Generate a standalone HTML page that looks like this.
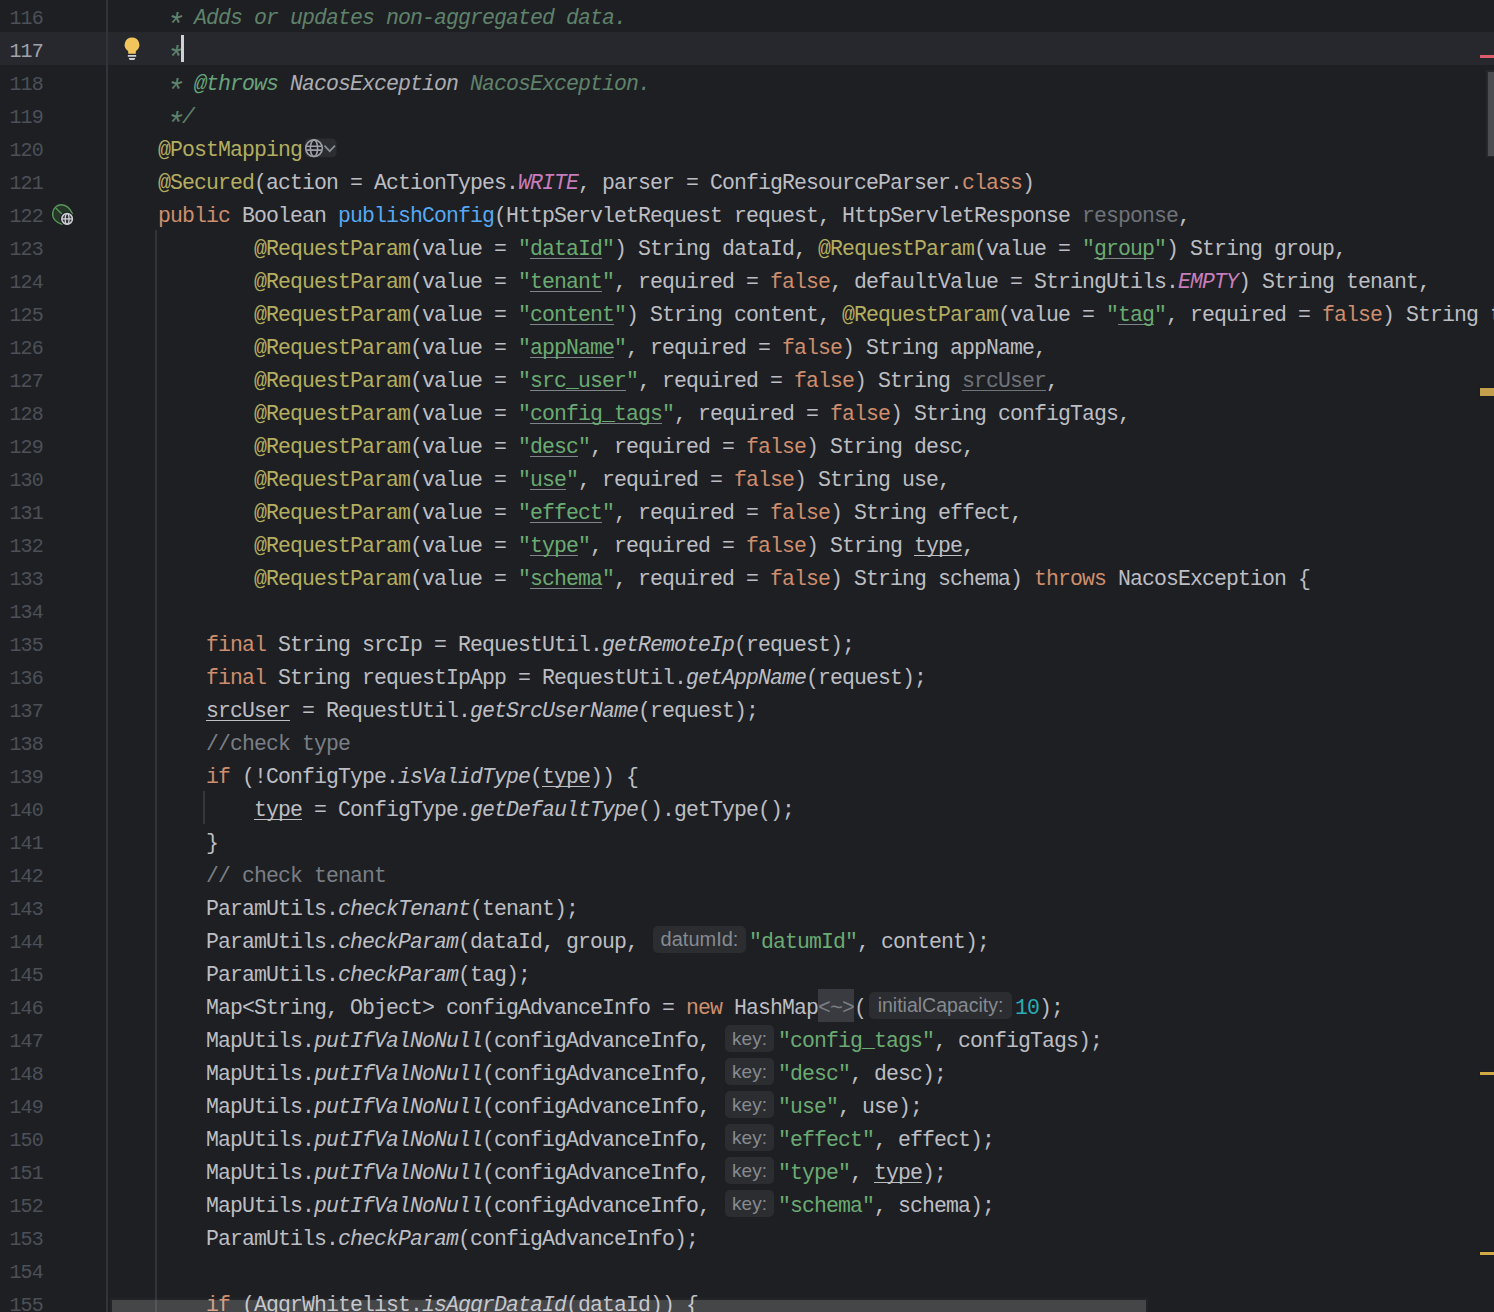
<!DOCTYPE html>
<html lang="en">
<head>
<meta charset="utf-8">
<title>ConfigController.java</title>
<style>
html,body{margin:0;padding:0;background:#1e1f22;}
body{width:1494px;height:1312px;overflow:hidden;}
#ed{position:relative;width:1494px;height:1312px;overflow:hidden;background:#1e1f22;
  font-family:"Liberation Mono",monospace;font-size:21.5px;letter-spacing:-0.9021px;color:#bcbec4;}
.r{position:absolute;left:0;width:1494px;height:33px;}
.r.cur{background:#26282e;}
.n{position:absolute;left:9.5px;top:0;height:39px;line-height:39px;color:#4b5059;white-space:pre;font-size:20px;letter-spacing:-0.9px;}
.cur .n{color:#a1a3ab;}
.c{position:absolute;left:110px;top:0;height:39px;line-height:39px;white-space:pre;}
.kw{color:#cf8e6d;}
.an{color:#b3ae60;}
.st{color:#6aab73;}
.nu{color:#2aacb8;}
.cm{color:#7a7e85;}
.dc{color:#5f826b;font-style:italic;}
.dt{color:#67a37c;font-style:italic;}
.dv{color:#abadb3;font-style:italic;}
.fn{color:#56a8f5;}
.sf{color:#c77dbb;font-style:italic;}
.i{font-style:italic;}
.as{display:inline-block;transform-origin:7.1px 12.9px;transform:translate(-1.2px,5.6px) scale(1.42);}
.un{color:#6f737a;}
.u{text-decoration:underline;text-decoration-skip-ink:none;text-decoration-thickness:1px;text-underline-offset:3px;text-decoration-color:#bcbec4;}
.st.u{text-decoration-color:#7f838a;}
.un.u{text-decoration-color:#6f737a;}
.h{display:inline-block;vertical-align:top;box-sizing:border-box;height:27px;line-height:27px;margin-top:3px;
  border-radius:5px;background:#2b2d30;color:#868a91;text-align:center;
  font-family:"Liberation Sans",sans-serif;font-size:19px;font-style:normal;letter-spacing:0;}
.fo{display:inline-block;vertical-align:top;height:33px;line-height:39px;background:#393b40;color:#7a7e85;}
.gl{display:inline-block;vertical-align:top;width:34px;height:20px;margin:7px 0 0 2px;}
.gl svg{display:block;}
.abs{position:absolute;}

</style>
</head>
<body>
<div id="ed">
<div class="r" style="top:-1px"><span class="n">116</span><span class="c">     <span class="dc as">*</span><span class="dc"> Adds or updates non-aggregated data.</span></span></div>
<div class="r cur" style="top:32px"><span class="n">117</span><span class="c">     <span class="dc as">*</span></span></div>
<div class="r" style="top:65px"><span class="n">118</span><span class="c">     <span class="dc as">*</span><span class="dc"> </span><span class="dt">@throws</span> <span class="dv">NacosException</span> <span class="dc">NacosException.</span></span></div>
<div class="r" style="top:98px"><span class="n">119</span><span class="c">     <span class="dc as">*</span><span class="dc">/</span></span></div>
<div class="r" style="top:131px"><span class="n">120</span><span class="c">    <span class="an">@PostMapping</span><span class="gl"><svg width="34" height="20" viewBox="0 0 34 20"><rect x="1" y="0.6" width="31.6" height="18.6" rx="4.5" fill="#2b2d30"/><g fill="none" stroke="#9da0a8" stroke-width="1.6"><circle cx="10" cy="10.2" r="8.3" fill="#1e1f22"/><ellipse cx="10" cy="10.2" rx="3.6" ry="8.3"/><path d="M2.2 8.2H17.8M2.2 12.1H17.8"/></g><path d="M20.4 7.6 L25.7 13.2 L31 7.6" fill="none" stroke="#868e96" stroke-width="1.7"/></svg></span></span></div>
<div class="r" style="top:164px"><span class="n">121</span><span class="c">    <span class="an">@Secured</span>(action = ActionTypes.<span class="sf">WRITE</span>, parser = ConfigResourceParser.<span class="kw">class</span>)</span></div>
<div class="r" style="top:197px"><span class="n">122</span><span class="c">    <span class="kw">public</span> Boolean <span class="fn">publishConfig</span>(HttpServletRequest request, HttpServletResponse <span class="un">response</span>,</span></div>
<div class="r" style="top:230px"><span class="n">123</span><span class="c">            <span class="an">@RequestParam</span>(value = <span class="st">"</span><span class="st u">dataId</span><span class="st">"</span>) String dataId, <span class="an">@RequestParam</span>(value = <span class="st">"</span><span class="st u">group</span><span class="st">"</span>) String group,</span></div>
<div class="r" style="top:263px"><span class="n">124</span><span class="c">            <span class="an">@RequestParam</span>(value = <span class="st">"</span><span class="st u">tenant</span><span class="st">"</span>, required = <span class="kw">false</span>, defaultValue = StringUtils.<span class="sf">EMPTY</span>) String tenant,</span></div>
<div class="r" style="top:296px"><span class="n">125</span><span class="c">            <span class="an">@RequestParam</span>(value = <span class="st">"</span><span class="st u">content</span><span class="st">"</span>) String content, <span class="an">@RequestParam</span>(value = <span class="st">"</span><span class="st u">tag</span><span class="st">"</span>, required = <span class="kw">false</span>) String tag,</span></div>
<div class="r" style="top:329px"><span class="n">126</span><span class="c">            <span class="an">@RequestParam</span>(value = <span class="st">"</span><span class="st u">appName</span><span class="st">"</span>, required = <span class="kw">false</span>) String appName,</span></div>
<div class="r" style="top:362px"><span class="n">127</span><span class="c">            <span class="an">@RequestParam</span>(value = <span class="st">"</span><span class="st u">src_user</span><span class="st">"</span>, required = <span class="kw">false</span>) String <span class="un u">srcUser</span>,</span></div>
<div class="r" style="top:395px"><span class="n">128</span><span class="c">            <span class="an">@RequestParam</span>(value = <span class="st">"</span><span class="st u">config_tags</span><span class="st">"</span>, required = <span class="kw">false</span>) String configTags,</span></div>
<div class="r" style="top:428px"><span class="n">129</span><span class="c">            <span class="an">@RequestParam</span>(value = <span class="st">"</span><span class="st u">desc</span><span class="st">"</span>, required = <span class="kw">false</span>) String desc,</span></div>
<div class="r" style="top:461px"><span class="n">130</span><span class="c">            <span class="an">@RequestParam</span>(value = <span class="st">"</span><span class="st u">use</span><span class="st">"</span>, required = <span class="kw">false</span>) String use,</span></div>
<div class="r" style="top:494px"><span class="n">131</span><span class="c">            <span class="an">@RequestParam</span>(value = <span class="st">"</span><span class="st u">effect</span><span class="st">"</span>, required = <span class="kw">false</span>) String effect,</span></div>
<div class="r" style="top:527px"><span class="n">132</span><span class="c">            <span class="an">@RequestParam</span>(value = <span class="st">"</span><span class="st u">type</span><span class="st">"</span>, required = <span class="kw">false</span>) String <span class="u">type</span>,</span></div>
<div class="r" style="top:560px"><span class="n">133</span><span class="c">            <span class="an">@RequestParam</span>(value = <span class="st">"</span><span class="st u">schema</span><span class="st">"</span>, required = <span class="kw">false</span>) String schema) <span class="kw">throws</span> NacosException {</span></div>
<div class="r" style="top:593px"><span class="n">134</span><span class="c"></span></div>
<div class="r" style="top:626px"><span class="n">135</span><span class="c">        <span class="kw">final</span> String srcIp = RequestUtil.<span class="i">getRemoteIp</span>(request);</span></div>
<div class="r" style="top:659px"><span class="n">136</span><span class="c">        <span class="kw">final</span> String requestIpApp = RequestUtil.<span class="i">getAppName</span>(request);</span></div>
<div class="r" style="top:692px"><span class="n">137</span><span class="c">        <span class="u">srcUser</span> = RequestUtil.<span class="i">getSrcUserName</span>(request);</span></div>
<div class="r" style="top:725px"><span class="n">138</span><span class="c">        <span class="cm">//check type</span></span></div>
<div class="r" style="top:758px"><span class="n">139</span><span class="c">        <span class="kw">if</span> (!ConfigType.<span class="i">isValidType</span>(<span class="u">type</span>)) {</span></div>
<div class="r" style="top:791px"><span class="n">140</span><span class="c">            <span class="u">type</span> = ConfigType.<span class="i">getDefaultType</span>().getType();</span></div>
<div class="r" style="top:824px"><span class="n">141</span><span class="c">        }</span></div>
<div class="r" style="top:857px"><span class="n">142</span><span class="c">        <span class="cm">// check tenant</span></span></div>
<div class="r" style="top:890px"><span class="n">143</span><span class="c">        ParamUtils.<span class="i">checkTenant</span>(tenant);</span></div>
<div class="r" style="top:923px"><span class="n">144</span><span class="c">        ParamUtils.<span class="i">checkParam</span>(dataId, group, <span class="h" style="width:93px;margin-right:3px;margin-left:3px;font-size:20px">datumId:</span><span class="st">"datumId"</span>, content);</span></div>
<div class="r" style="top:956px"><span class="n">145</span><span class="c">        ParamUtils.<span class="i">checkParam</span>(tag);</span></div>
<div class="r" style="top:989px"><span class="n">146</span><span class="c">        Map&lt;String, Object&gt; configAdvanceInfo = <span class="kw">new</span> HashMap<span class="fo">&lt;~&gt;</span>(<span class="h" style="width:143px;margin-right:3px;margin-left:3px;font-size:19.5px">initialCapacity:</span><span class="nu">10</span>);</span></div>
<div class="r" style="top:1022px"><span class="n">147</span><span class="c">        MapUtils.<span class="i">putIfValNoNull</span>(configAdvanceInfo, <span class="h" style="width:49px;margin-right:4px;margin-left:3px;font-size:19px">key:</span><span class="st">"config_tags"</span>, configTags);</span></div>
<div class="r" style="top:1055px"><span class="n">148</span><span class="c">        MapUtils.<span class="i">putIfValNoNull</span>(configAdvanceInfo, <span class="h" style="width:49px;margin-right:4px;margin-left:3px;font-size:19px">key:</span><span class="st">"desc"</span>, desc);</span></div>
<div class="r" style="top:1088px"><span class="n">149</span><span class="c">        MapUtils.<span class="i">putIfValNoNull</span>(configAdvanceInfo, <span class="h" style="width:49px;margin-right:4px;margin-left:3px;font-size:19px">key:</span><span class="st">"use"</span>, use);</span></div>
<div class="r" style="top:1121px"><span class="n">150</span><span class="c">        MapUtils.<span class="i">putIfValNoNull</span>(configAdvanceInfo, <span class="h" style="width:49px;margin-right:4px;margin-left:3px;font-size:19px">key:</span><span class="st">"effect"</span>, effect);</span></div>
<div class="r" style="top:1154px"><span class="n">151</span><span class="c">        MapUtils.<span class="i">putIfValNoNull</span>(configAdvanceInfo, <span class="h" style="width:49px;margin-right:4px;margin-left:3px;font-size:19px">key:</span><span class="st">"type"</span>, <span class="u">type</span>);</span></div>
<div class="r" style="top:1187px"><span class="n">152</span><span class="c">        MapUtils.<span class="i">putIfValNoNull</span>(configAdvanceInfo, <span class="h" style="width:49px;margin-right:4px;margin-left:3px;font-size:19px">key:</span><span class="st">"schema"</span>, schema);</span></div>
<div class="r" style="top:1220px"><span class="n">153</span><span class="c">        ParamUtils.<span class="i">checkParam</span>(configAdvanceInfo);</span></div>
<div class="r" style="top:1253px"><span class="n">154</span><span class="c"></span></div>
<div class="r" style="top:1286px"><span class="n">155</span><span class="c">        <span class="kw">if</span> (AggrWhitelist.<span class="i">isAggrDataId</span>(dataId)) {</span></div>
<div class="abs" style="left:106px;top:0;width:2px;height:1312px;background:#313438"></div>
<div class="abs" style="left:155px;top:230px;width:2px;height:1082px;background:#313438"></div>
<div class="abs" style="left:203px;top:791px;width:2px;height:33px;background:#34363b"></div>
<div class="abs" style="left:181px;top:35px;width:3px;height:27px;background:#ced0d6"></div>
<!-- intention bulb -->
<svg class="abs" style="left:122px;top:35px" width="20" height="28" viewBox="0 0 20 28">
<path d="M10 2.4a7.35 7.35 0 0 0-4.3 13.3c.3.25.5.6.5 1v2.1h7.6v-2.1c0-.4.2-.75.5-1A7.35 7.35 0 0 0 10 2.4z" fill="#f2c55c"/>
<rect x="5.8" y="19.9" width="8.4" height="1.9" rx=".3" fill="#ced0d6"/>
<path d="M6.8 22.9h6.4v.4a1.6 1.6 0 0 1-1.6 1.6h-3.2a1.6 1.6 0 0 1-1.6-1.6z" fill="#ced0d6"/>
</svg>
<!-- spring bean + web gutter icon -->
<svg class="abs" style="left:50px;top:202px" width="26" height="26" viewBox="0 0 26 26">
<path d="M12 22.200C6.300 21 2 16.400 2.700 10.800C3.400 5.800 7.500 2.600 11.500 2.700C16.300 2.900 20 6.200 22.300 11.500C20.500 16.500 17 20.800 12 22.200z" fill="#253627" stroke="#57965c" stroke-width="1.4" stroke-linejoin="round"/>
<path d="M5.700 5.900L11.900 11.900" stroke="#57965c" stroke-width="1.4" fill="none"/>
<circle cx="17.100" cy="16.900" r="7.200" fill="#1e1f22"/>
<circle cx="17.100" cy="16.900" r="5.300" fill="#33353a" stroke="#ced0d6" stroke-width="1.5"/>
<ellipse cx="17.100" cy="16.900" rx="1.900" ry="5.300" fill="none" stroke="#ced0d6" stroke-width="1.3"/>
<path d="M11.800 16.900h10.600" fill="none" stroke="#ced0d6" stroke-width="1.3"/>
</svg>
<!-- error stripe marks -->
<div class="abs" style="left:1480px;top:55px;width:14px;height:3px;background:#db5c6b"></div>
<div class="abs" style="left:1480px;top:388px;width:14px;height:8px;background:#c4a04c;box-shadow:0 0 0 1px #1a1b24"></div>
<div class="abs" style="left:1480px;top:1072px;width:14px;height:3px;background:#d1a945;box-shadow:0 0 0 1px #1a1b24"></div>
<div class="abs" style="left:1480px;top:1252px;width:14px;height:3px;background:#d1a945;box-shadow:0 0 0 1px #1a1b24"></div>
<!-- vertical scrollbar thumb -->
<div class="abs" style="left:1486px;top:70px;width:8px;height:87px;background:#27282b"></div>
<div class="abs" style="left:1488px;top:72px;width:6px;height:84px;background:#4b4c4f"></div>
<!-- horizontal scrollbar thumb -->
<div class="abs" style="left:110px;top:1298px;width:1038px;height:14px;background:rgba(255,255,255,0.025)"></div>
<div class="abs" style="left:112px;top:1300px;width:1034px;height:12px;background:rgba(255,255,255,0.155)"></div>

</div>
</body>
</html>
